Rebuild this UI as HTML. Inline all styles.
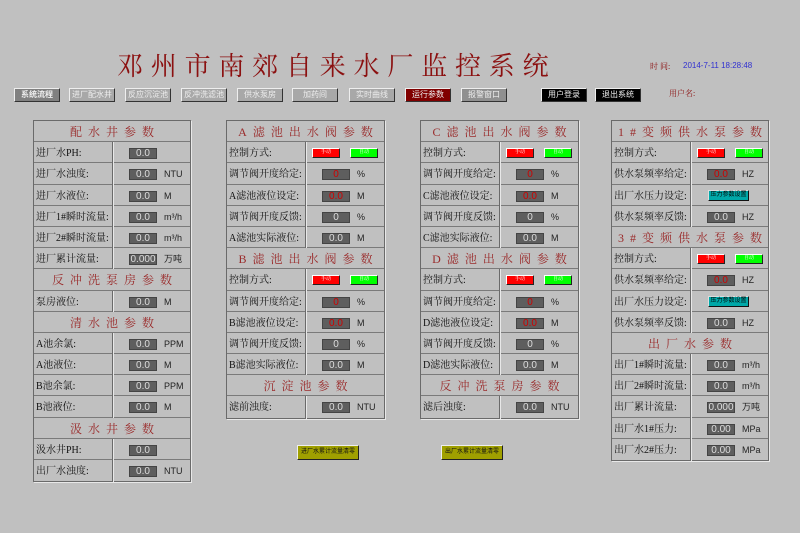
<!DOCTYPE html>
<html><head><meta charset="utf-8"><style>
*{margin:0;padding:0;box-sizing:border-box}
body{width:800px;height:533px;background:#c0c0c0;position:relative;overflow:hidden;font-family:"Liberation Serif","Noto Serif CJK SC","Noto Sans CJK SC",serif;color:#111}
.a{position:absolute}
.title{left:117px;top:52px;font-size:26px;line-height:30px;color:#8b1010;letter-spacing:7.8px;white-space:nowrap;font-family:"Liberation Serif","Noto Serif CJK SC",serif}
.btn{position:absolute;top:88px;height:14px;width:46px;font-size:8px;line-height:12px;text-align:center;color:#eee;background:#a8a8a8;border:1px solid;border-color:#eee #333 #333 #eee;font-family:"Liberation Sans","Noto Sans CJK SC",sans-serif;white-space:nowrap;overflow:hidden}
.p{position:absolute;border:1px solid #6a6a6a;box-shadow:1px 1px 0 #e8e8e8}
.r{height:21.2px;position:relative;border-bottom:1px solid #7a7a7a;font-size:10px;line-height:14px;padding:5px 0 0 2px;white-space:nowrap}
.r:last-child{border-bottom:none}
.h{text-align:center;color:#9a2a2a;font-size:12px;line-height:16px;padding-top:3px;letter-spacing:6px;padding-left:6px;font-family:"Liberation Serif","Noto Serif CJK SC",serif}
.d{position:absolute;left:78px;top:0;bottom:-1px;border-left:1px solid #6a6a6a;box-shadow:1px 0 0 #e8e8e8}
.v{position:absolute;left:95px;top:6px;width:28px;height:11px;background:#5e5e5e;border:1px solid #444;color:#ddd;font-size:10px;line-height:9px;text-align:center;font-family:"Liberation Sans",sans-serif}
.v.red{color:#d00000}
.u{position:absolute;left:130px;top:5px;font-size:9px;line-height:12px;font-family:"Liberation Sans",sans-serif;color:#222}
.m{position:absolute;top:6px;width:28px;height:10px;font-size:5px;line-height:8px;text-align:center;color:#fff;border:1px solid;border-color:#fff #222 #222 #fff}
.m1{left:85px;background:#ff0000}.m2{left:123px;background:#00ff00}
.cy{position:absolute;left:96px;top:5px;width:41px;height:11px;background:#00a8a8;border:1px solid;border-color:#ddd #111 #111 #ddd;font-size:6px;line-height:9px;text-align:center;color:#000;font-family:"Liberation Sans","Noto Sans CJK SC",sans-serif}
.y{position:absolute;top:445px;height:15px;background:#a0a000;border:1px solid;border-color:#eee #222 #222 #eee;font-size:6px;line-height:13px;text-align:center;color:#111;font-family:"Liberation Sans","Noto Sans CJK SC",sans-serif}
</style></head><body>
<div class="a title">邓州市南郊自来水厂监控系统</div>
<div class="a" style="left:650px;top:61px;font-size:8px;color:#8b1010">时 间:</div>
<div class="a" style="left:683px;top:61px;font-size:8px;color:#3030d0;font-family:'Liberation Sans',sans-serif">2014-7-11 18:28:48</div>
<div class="a" style="left:669px;top:88px;font-size:8px;color:#8b1010">用户名:</div>

<div class="btn" style="left:14px;background:#808080;font-weight:bold">系统流程</div>
<div class="btn" style="left:69px">进厂配水井</div>
<div class="btn" style="left:125px">反应沉淀池</div>
<div class="btn" style="left:181px">反冲洗滤池</div>
<div class="btn" style="left:237px">供水泵房</div>
<div class="btn" style="left:292px">加药间</div>
<div class="btn" style="left:349px">实时曲线</div>
<div class="btn" style="left:405px;background:#800000">运行参数</div>
<div class="btn" style="left:461px;background:#909090">报警窗口</div>
<div class="btn" style="left:541px;background:#000">用户登录</div>
<div class="btn" style="left:595px;background:#000">退出系统</div>

<!-- Panel 1 -->
<div class="p" style="left:33px;top:120px;width:158px">
<div class="r h">配水井参数</div>
<div class="r">进厂水PH:<i class="d"></i><span class="v">0.0</span></div>
<div class="r">进厂水浊度:<i class="d"></i><span class="v">0.0</span><span class="u">NTU</span></div>
<div class="r">进厂水液位:<i class="d"></i><span class="v">0.0</span><span class="u">M</span></div>
<div class="r">进厂1#瞬时流量:<i class="d"></i><span class="v">0.0</span><span class="u">m³/h</span></div>
<div class="r">进厂2#瞬时流量:<i class="d"></i><span class="v">0.0</span><span class="u">m³/h</span></div>
<div class="r">进厂累计流量:<i class="d"></i><span class="v">0.000</span><span class="u">万吨</span></div>
<div class="r h">反冲洗泵房参数</div>
<div class="r">泵房液位:<i class="d"></i><span class="v">0.0</span><span class="u">M</span></div>
<div class="r h">清水池参数</div>
<div class="r">A池余氯:<i class="d"></i><span class="v">0.0</span><span class="u">PPM</span></div>
<div class="r">A池液位:<i class="d"></i><span class="v">0.0</span><span class="u">M</span></div>
<div class="r">B池余氯:<i class="d"></i><span class="v">0.0</span><span class="u">PPM</span></div>
<div class="r">B池液位:<i class="d"></i><span class="v">0.0</span><span class="u">M</span></div>
<div class="r h">汲水井参数</div>
<div class="r">汲水井PH:<i class="d"></i><span class="v">0.0</span></div>
<div class="r">出厂水浊度:<i class="d"></i><span class="v">0.0</span><span class="u">NTU</span></div>
</div>

<!-- Panel 2 -->
<div class="p" style="left:226px;top:120px;width:159px">
<div class="r h">A滤池出水阀参数</div>
<div class="r">控制方式:<i class="d"></i><span class="m m1">手动</span><span class="m m2">自动</span></div>
<div class="r">调节阀开度给定:<i class="d"></i><span class="v red">0</span><span class="u">%</span></div>
<div class="r">A滤池液位设定:<i class="d"></i><span class="v red">0.0</span><span class="u">M</span></div>
<div class="r">调节阀开度反馈:<i class="d"></i><span class="v">0</span><span class="u">%</span></div>
<div class="r">A滤池实际液位:<i class="d"></i><span class="v">0.0</span><span class="u">M</span></div>
<div class="r h">B滤池出水阀参数</div>
<div class="r">控制方式:<i class="d"></i><span class="m m1">手动</span><span class="m m2">自动</span></div>
<div class="r">调节阀开度给定:<i class="d"></i><span class="v red">0</span><span class="u">%</span></div>
<div class="r">B滤池液位设定:<i class="d"></i><span class="v red">0.0</span><span class="u">M</span></div>
<div class="r">调节阀开度反馈:<i class="d"></i><span class="v">0</span><span class="u">%</span></div>
<div class="r">B滤池实际液位:<i class="d"></i><span class="v">0.0</span><span class="u">M</span></div>
<div class="r h">沉淀池参数</div>
<div class="r">滤前浊度:<i class="d"></i><span class="v">0.0</span><span class="u">NTU</span></div>
</div>

<!-- Panel 3 -->
<div class="p" style="left:420px;top:120px;width:159px">
<div class="r h">C滤池出水阀参数</div>
<div class="r">控制方式:<i class="d"></i><span class="m m1">手动</span><span class="m m2">自动</span></div>
<div class="r">调节阀开度给定:<i class="d"></i><span class="v red">0</span><span class="u">%</span></div>
<div class="r">C滤池液位设定:<i class="d"></i><span class="v red">0.0</span><span class="u">M</span></div>
<div class="r">调节阀开度反馈:<i class="d"></i><span class="v">0</span><span class="u">%</span></div>
<div class="r">C滤池实际液位:<i class="d"></i><span class="v">0.0</span><span class="u">M</span></div>
<div class="r h">D滤池出水阀参数</div>
<div class="r">控制方式:<i class="d"></i><span class="m m1">手动</span><span class="m m2">自动</span></div>
<div class="r">调节阀开度给定:<i class="d"></i><span class="v red">0</span><span class="u">%</span></div>
<div class="r">D滤池液位设定:<i class="d"></i><span class="v red">0.0</span><span class="u">M</span></div>
<div class="r">调节阀开度反馈:<i class="d"></i><span class="v">0</span><span class="u">%</span></div>
<div class="r">D滤池实际液位:<i class="d"></i><span class="v">0.0</span><span class="u">M</span></div>
<div class="r h">反冲洗泵房参数</div>
<div class="r">滤后浊度:<i class="d"></i><span class="v">0.0</span><span class="u">NTU</span></div>
</div>

<!-- Panel 4 -->
<div class="p" style="left:611px;top:120px;width:158px">
<div class="r h">1#变频供水泵参数</div>
<div class="r">控制方式:<i class="d"></i><span class="m m1">手动</span><span class="m m2">自动</span></div>
<div class="r">供水泵频率给定:<i class="d"></i><span class="v red">0.0</span><span class="u">HZ</span></div>
<div class="r">出厂水压力设定:<i class="d"></i><span class="cy">压力参数设置</span></div>
<div class="r">供水泵频率反馈:<i class="d"></i><span class="v">0.0</span><span class="u">HZ</span></div>
<div class="r h">3#变频供水泵参数</div>
<div class="r">控制方式:<i class="d"></i><span class="m m1">手动</span><span class="m m2">自动</span></div>
<div class="r">供水泵频率给定:<i class="d"></i><span class="v red">0.0</span><span class="u">HZ</span></div>
<div class="r">出厂水压力设定:<i class="d"></i><span class="cy">压力参数设置</span></div>
<div class="r">供水泵频率反馈:<i class="d"></i><span class="v">0.0</span><span class="u">HZ</span></div>
<div class="r h">出厂水参数</div>
<div class="r">出厂1#瞬时流量:<i class="d"></i><span class="v">0.0</span><span class="u">m³/h</span></div>
<div class="r">出厂2#瞬时流量:<i class="d"></i><span class="v">0.0</span><span class="u">m³/h</span></div>
<div class="r">出厂累计流量:<i class="d"></i><span class="v">0.000</span><span class="u">万吨</span></div>
<div class="r">出厂水1#压力:<i class="d"></i><span class="v">0.00</span><span class="u">MPa</span></div>
<div class="r">出厂水2#压力:<i class="d"></i><span class="v">0.00</span><span class="u">MPa</span></div>
</div>

<div class="y" style="left:297px;width:62px">进厂水累计流量清零</div>
<div class="y" style="left:441px;width:62px">出厂水累计流量清零</div>
</body></html>
